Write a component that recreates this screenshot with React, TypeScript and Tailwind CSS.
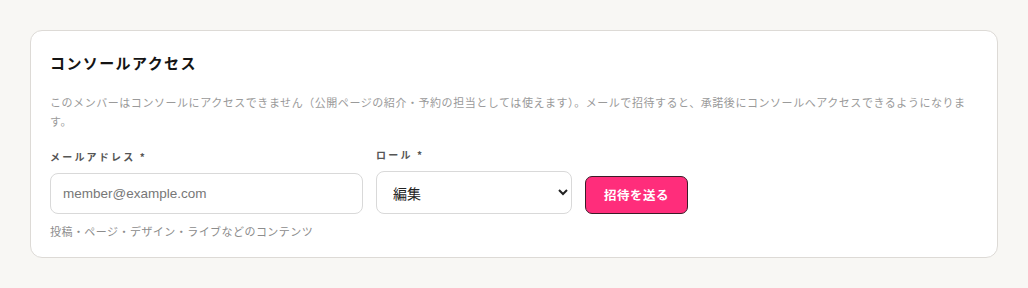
import React from "react";

export default function App() {
  const jp = { fontFamily: '"Noto Sans CJK JP", "Noto Sans", sans-serif' };
  return (
    <div className="w-[1028px] h-[288px] bg-[#f8f7f4] pt-[30px] pl-[30px]" style={jp}>
      <div className="w-[968px] h-[228px] bg-white border border-[#dddad6] rounded-[12px] px-[19px] pt-[22px] pb-[18px]">
        <h2 className="text-[15px] leading-[20px] font-bold tracking-[1.4px] text-[#141414]">コンソールアクセス</h2>
        <p className="mt-[20px] text-[11px] leading-[19px] tracking-[0.55px] text-[#9a9a9a]">
          このメンバーはコンソールにアクセスできません（公開ページの紹介・予約の担当としては使えます）。メールで招待すると、承諾後にコンソールへアクセスできるようになります。
        </p>
        <div className="mt-[16px] flex items-end gap-[13px]">
          <div className="w-[313px] flex flex-col">
            <label className="text-[10px] leading-[16px] font-bold tracking-[2.2px] text-[#555]">メールアドレス *</label>
            <input
              className="mt-[8px] h-[41px] w-full rounded-[8px] border border-[#d9d9d9] px-[12px] text-[13.5px] text-[#222] placeholder:text-[#777] outline-none"
              style={{ fontFamily: '"Liberation Sans", Arial, sans-serif' }}
              placeholder="member@example.com"
            />
          </div>
          <div className="w-[196px] flex flex-col">
            <label className="text-[10px] leading-[16px] font-bold tracking-[2.2px] text-[#555]">ロール *</label>
            <select
              className="mt-[8px] h-[43px] w-full rounded-[8px] border border-[#d9d9d9] bg-white pl-[12px] pr-[4px] text-[14px] text-[#222] outline-none"
              style={jp}
              defaultValue="編集"
            >
              <option>編集</option>
              <option>閲覧</option>
              <option>管理者</option>
            </select>
          </div>
          <button className="h-[38px] w-[103px] rounded-[7px] border border-[#3b1c28] bg-[#ff2d7b] text-[12.5px] font-bold tracking-[0.5px] text-white">
            招待を送る
          </button>
        </div>
        <p className="mt-[9px] text-[11px] leading-[16px] tracking-[0.45px] text-[#8c8c8c]">
          投稿・ページ・デザイン・ライブなどのコンテンツ
        </p>
      </div>
    </div>
  );
}
